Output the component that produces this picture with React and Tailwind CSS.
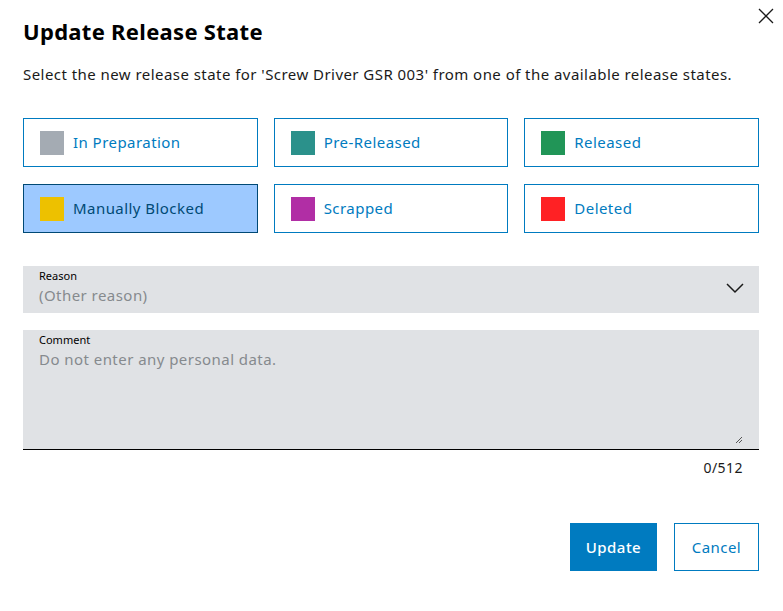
export default function App() {
  const states = [
    ["In Preparation", "#a4abb3"],
    ["Pre-Released", "#2b918b"],
    ["Released", "#219557"],
    ["Manually Blocked", "#edc100", true],
    ["Scrapped", "#b12ea5"],
    ["Deleted", "#ff2124"],
  ];
  return (
    <div className="relative w-[783px] h-[611px] bg-white px-[23px] pt-[16px] tracking-[0.45px]" style={{ fontFamily: '"Noto Sans", sans-serif' }}>
      <button className="absolute right-[9px] top-[8px] text-[#1a1a1a]">
        <svg width="16" height="16" viewBox="0 0 16 16" stroke="currentColor" strokeWidth="1.3"><path d="M1 1L15 15M15 1L1 15" /></svg>
      </button>
      <h1 className="text-[22px] font-bold text-[#000] leading-[30px] tracking-[0.3px]">Update Release State</h1>
      <p className="mt-[16px] text-[15px] leading-[25px] text-[#1a1a1a] w-[720px]">Select the new release state for 'Screw Driver GSR 003' from one of the available release states.</p>
      <div className="mt-[31px] grid grid-cols-3 gap-x-[16px] gap-y-[17px] w-[736px]">
        {states.map(([name, color, sel]) => (
          <div key={name} className={`h-[49px] flex items-center px-[16px] border ${sel ? "bg-[#9dc9ff] border-[#004975] text-[#004975]" : "bg-white border-[#007bc0] text-[#007bc0]"}`}>
            <span className="w-[24px] h-[24px] mr-[9px]" style={{ background: color }} />
            <span className="text-[15px]">{name}</span>
          </div>
        ))}
      </div>
      <div className="mt-[33px] w-[736px] h-[47px] bg-[#e0e2e5] px-[16px] pt-[2px] relative">
        <div className="text-[11px] text-[#000] leading-[16px] tracking-normal">Reason</div>
        <div className="text-[15px] text-[#868a8e] leading-[22px]">(Other reason)</div>
        <svg className="absolute right-[15px] top-[17px]" width="18" height="11" viewBox="0 0 18 11" fill="none" stroke="#1a1a1a" strokeWidth="1.5"><path d="M1 1L9 9L17 1" /></svg>
      </div>
      <div className="mt-[17px] w-[736px] h-[120px] bg-[#e0e2e5] border-b border-black px-[16px] pt-[2px] relative">
        <div className="text-[11px] text-[#000] leading-[16px] tracking-normal">Comment</div>
        <div className="text-[15px] text-[#868a8e] leading-[22px]">Do not enter any personal data.</div>
        <svg className="absolute right-[16px] bottom-[5px]" width="8" height="8" viewBox="0 0 8 8" stroke="#555" strokeWidth="1"><path d="M1 7L7 1M4 7L7 4" /></svg>
      </div>
      <div className="w-[720px] text-right text-[14px] text-[#1a1a1a] mt-[8px] leading-[20px]">0/512</div>
      <div className="w-[736px] flex justify-end gap-[17px] mt-[45px]">
        <button className="w-[87px] h-[48px] bg-[#007bc0] text-white text-[15px] font-medium">Update</button>
        <button className="w-[85px] h-[48px] border border-[#007bc0] text-[#007bc0] text-[15px]">Cancel</button>
      </div>
    </div>
  );
}
